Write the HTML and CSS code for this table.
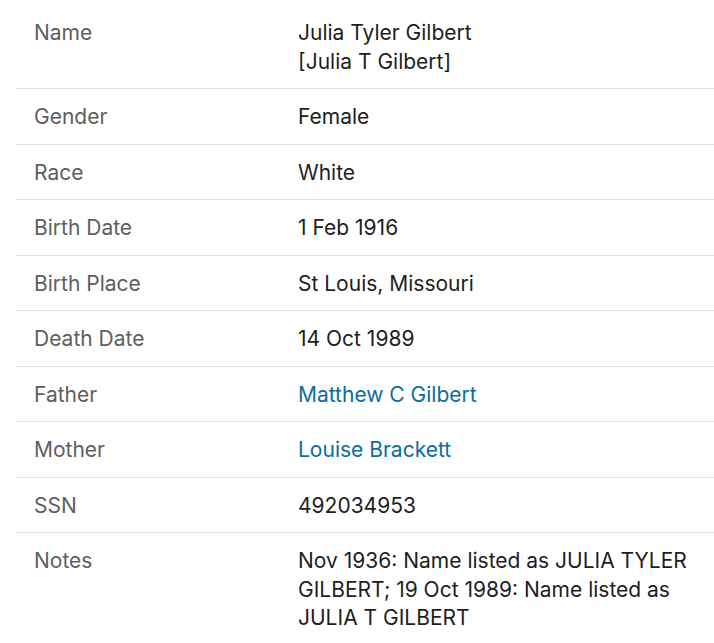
FILE: index.html
```html
<!DOCTYPE html>
<html lang="en">
<head>
<meta charset="utf-8">
<title>Record</title>
<link rel="stylesheet" href="styles.css">
</head>
<body>
<div class="record">
  <div class="row"><div class="label">Name</div><div class="value">Julia Tyler Gilbert<br>[Julia T Gilbert]</div></div>
  <div class="row"><div class="label">Gender</div><div class="value">Female</div></div>
  <div class="row"><div class="label">Race</div><div class="value">White</div></div>
  <div class="row"><div class="label">Birth Date</div><div class="value">1 Feb 1916</div></div>
  <div class="row"><div class="label">Birth Place</div><div class="value">St Louis, Missouri</div></div>
  <div class="row"><div class="label">Death Date</div><div class="value">14 Oct 1989</div></div>
  <div class="row"><div class="label">Father</div><div class="value"><a class="link" href="#">Matthew C Gilbert</a></div></div>
  <div class="row"><div class="label">Mother</div><div class="value"><a class="link" href="#">Louise Brackett</a></div></div>
  <div class="row"><div class="label">SSN</div><div class="value">492034953</div></div>
  <div class="row last"><div class="label">Notes</div><div class="value">Nov 1936: Name listed as JULIA TYLER GILBERT; 19 Oct 1989: Name listed as JULIA T GILBERT</div></div>
</div>
</body>
</html>
```
FILE: styles.css
```css
html, body {
  margin: 0;
  padding: 0;
  background: #ffffff;
}
body {
  font-family: Inter, "Liberation Sans", sans-serif;
  font-size: 21px;
  line-height: 28.5px;
  color: #1e1e1e;
}
.record {
  margin-left: 15px;
  padding-top: 5px;
}
.row {
  display: grid;
  grid-template-columns: 283px 1fr;
  padding: 14px 0 12px;
  border-bottom: 1px solid #e3e3e3;
}
.row.last {
  border-bottom: none;
}
.label {
  padding-left: 19px;
  color: #5e5e5e;
}
.value {
  padding-right: 10px;
}
.link {
  color: #0b6d9a;
  text-decoration: none;
}
```
